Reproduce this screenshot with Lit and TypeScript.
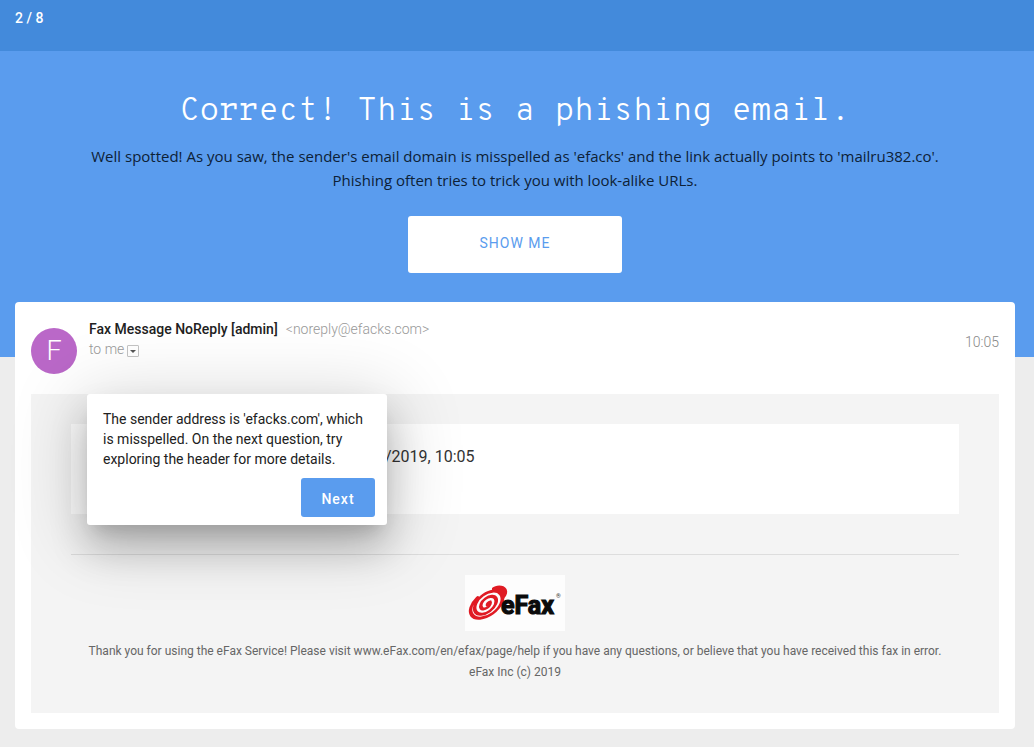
import { LitElement, html, css } from "lit";
import { customElement, property } from "lit/decorators.js";

@customElement("efax-logo")
class EfaxLogo extends LitElement {
  static styles = css`
    :host {
      display: block;
      width: 100px;
      height: 56px;
      background: #fdfdfd;
    }
    .art {
      display: block;
    }
    .word {
      font: bold 25px "Roboto", sans-serif;
      fill: #0b0b0b;
      stroke: #0b0b0b;
      stroke-width: 1.2;
    }
    .mark {
      font: 6px "Roboto", sans-serif;
      fill: #333;
    }
  `;

  render() {
    return html`
      <svg class="art" width="100" height="56" viewBox="0 0 100 56" role="img" aria-label="eFax">
        <g transform="translate(22 29) rotate(-36) scale(1.38 .84)" fill="none" stroke="#e01b24" stroke-linecap="round">
          <path
            stroke-width="2.9"
            d="M0 1A1.600 1.600 0 0 1 2.500 0A3.750 3.750 0 0 1 -5 0A6.250 6.250 0 0 1 7.500 0A8.750 8.750 0 0 1 -10 0A11.250 11.250 0 0 1 12.500 0A13 13 0 0 1 -13.500 0A13.500 13.500 0 0 1 -3 -13"
          />
        </g>
        <path
          d="M27 13C31 9.500 39 9.500 41.500 14C43 17 42 20 39.500 23C39 27 37 30 35 32C37 27 38 21 36 18C34 15.500 31 15 27 16Z"
          fill="#e01b24"
        />
        <text class="word" x="36" y="39">eFax</text>
        <text class="mark" x="91" y="23">®</text>
      </svg>
    `;
  }
}

@customElement("hint-card")
class HintCard extends LitElement {
  @property() text = "";

  static styles = css`
    :host {
      display: block;
      box-sizing: border-box;
      width: 300px;
      padding: 15px 12px 8px 16px;
      background: #fff;
      border-radius: 3px;
      box-shadow:
        0 9px 72px 8px rgba(0, 0, 0, 0.16),
        0 11px 15px -7px rgba(0, 0, 0, 0.12),
        0 24px 38px 0 rgba(0, 0, 0, 0.2);
    }
    .text {
      margin: 0 0 9px;
      font-size: 14px;
      line-height: 20px;
      color: #212121;
    }
    .actions {
      display: flex;
      justify-content: flex-end;
    }
    .next {
      min-width: 74px;
      padding: 2px 20px 0;
      height: 39px;
      border: 0;
      border-radius: 3px;
      background: #5a9cee;
      color: #fff;
      font: 500 14px/20px "Roboto", sans-serif;
      letter-spacing: 1px;
      cursor: pointer;
    }
  `;

  render() {
    return html`
      <p class="text">${this.text}</p>
      <div class="actions"><button class="next" type="button">Next</button></div>
    `;
  }
}

@customElement("app-root")
class AppRoot extends LitElement {
  static styles = css`
    :host {
      display: block;
      min-height: 100vh;
      box-sizing: border-box;
      padding-bottom: 18px;
      background: #ededed;
      font-family: "Roboto", sans-serif;
    }
    .progress {
      padding: 8px 15px 23px;
      background: #438adb;
      color: #fff;
      font-size: 14px;
      font-weight: 500;
      line-height: 20px;
    }
    .hero {
      padding: 41px 24px 84px 20px;
      background: #5a9cee;
      text-align: center;
    }
    .title {
      margin: 0 0 12px;
      color: #fff;
      font: 300 32px/40px "Overpass Mono", "Liberation Mono", monospace;
    }
    .summary {
      max-width: 880px;
      margin: 0 auto 24px;
      color: #0d2136;
      font: 15px/24px "Open Sans", sans-serif;
    }
    .show {
      width: 214px;
      height: 57px;
      padding: 0 0 4px;
      border: 0;
      border-radius: 3px;
      background: #fff;
      color: #5a9cee;
      font: 14px/20px "Roboto", sans-serif;
      letter-spacing: 1px;
      cursor: pointer;
    }
    .mail {
      margin: -55px 19px 0 15px;
      padding: 16px;
      background: #fff;
      border-radius: 4px;
    }
    .head {
      position: relative;
      display: flex;
      gap: 12px;
      height: 76px;
    }
    .avatar {
      width: 46px;
      height: 46px;
      margin-top: 10px;
      border-radius: 50%;
      background: #ba68c8;
      color: #fff;
      font-size: 27px;
      font-weight: 300;
      line-height: 46px;
      text-align: center;
    }
    .who {
      flex: 1;
      font-size: 14px;
      line-height: 20px;
      color: #999;
      font-weight: 300;
    }
    .from {
      display: flex;
      gap: 8px;
      margin-top: 1px;
    }
    .name {
      font-weight: 500;
      color: #212121;
    }
    .to {
      display: flex;
      align-items: center;
      gap: 3px;
    }
    .details {
      display: block;
      width: 12px;
      height: 12px;
      margin-top: 3px;
      padding: 0;
      border: 1px solid #c4c4c4;
      border-radius: 1px;
      background: #fff;
    }
    .caret {
      display: block;
    }
    .time {
      margin-top: 14px;
      font-size: 14px;
      font-weight: 300;
      line-height: 20px;
      color: #888;
    }
    .hint {
      position: absolute;
      top: 76px;
      left: 56px;
      z-index: 1;
    }
    .body {
      padding: 30px 40px;
      background: #f4f4f4;
    }
    .message {
      display: flex;
      padding: 21px 20px 45px 314px;
      background: #fff;
      color: #333;
      font-size: 16px;
      line-height: 24px;
    }
    .rule {
      margin: 40px 0 20px;
      border: 0;
      border-top: 1px solid #ddd;
    }
    .footer {
      display: flex;
      flex-direction: column;
      align-items: center;
    }
    .note {
      margin: 10px 0 0;
      color: #666;
      font-size: 12px;
      line-height: 21px;
      text-align: center;
    }
  `;

  render() {
    return html`
      <div class="progress">2 / 8</div>
      <header class="hero">
        <h1 class="title">Correct! This is a phishing email.</h1>
        <p class="summary">
          Well spotted! As you saw, the sender's email domain is misspelled as 'efacks' and the link actually points to
          'mailru382.co'. Phishing often tries to trick you with look-alike URLs.
        </p>
        <button class="show" type="button">SHOW ME</button>
      </header>
      <main class="mail">
        <div class="head">
          <div class="avatar">F</div>
          <div class="who">
            <div class="from">
              <span class="name">Fax Message NoReply [admin]</span>
              <span>&lt;noreply@efacks.com&gt;</span>
            </div>
            <div class="to">
              <span>to me</span>
              <button class="details" type="button" aria-label="Show details">
                <svg class="caret" width="10" height="10" viewBox="0 0 10 10"><path d="M2 4h6L5 7z" fill="#555" /></svg>
              </button>
            </div>
          </div>
          <time class="time">10:05</time>
          <hint-card
            class="hint"
            text="The sender address is 'efacks.com', which is misspelled. On the next question, try exploring the header for more details."
          ></hint-card>
        </div>
        <div class="body">
          <div class="message">/2019, 10:05</div>
          <hr class="rule" />
          <div class="footer">
            <efax-logo></efax-logo>
            <p class="note">
              Thank you for using the eFax Service! Please visit www.eFax.com/en/efax/page/help if you have any
              questions, or believe that you have received this fax in error.<br />eFax Inc (c) 2019
            </p>
          </div>
        </div>
      </main>
    `;
  }
}
